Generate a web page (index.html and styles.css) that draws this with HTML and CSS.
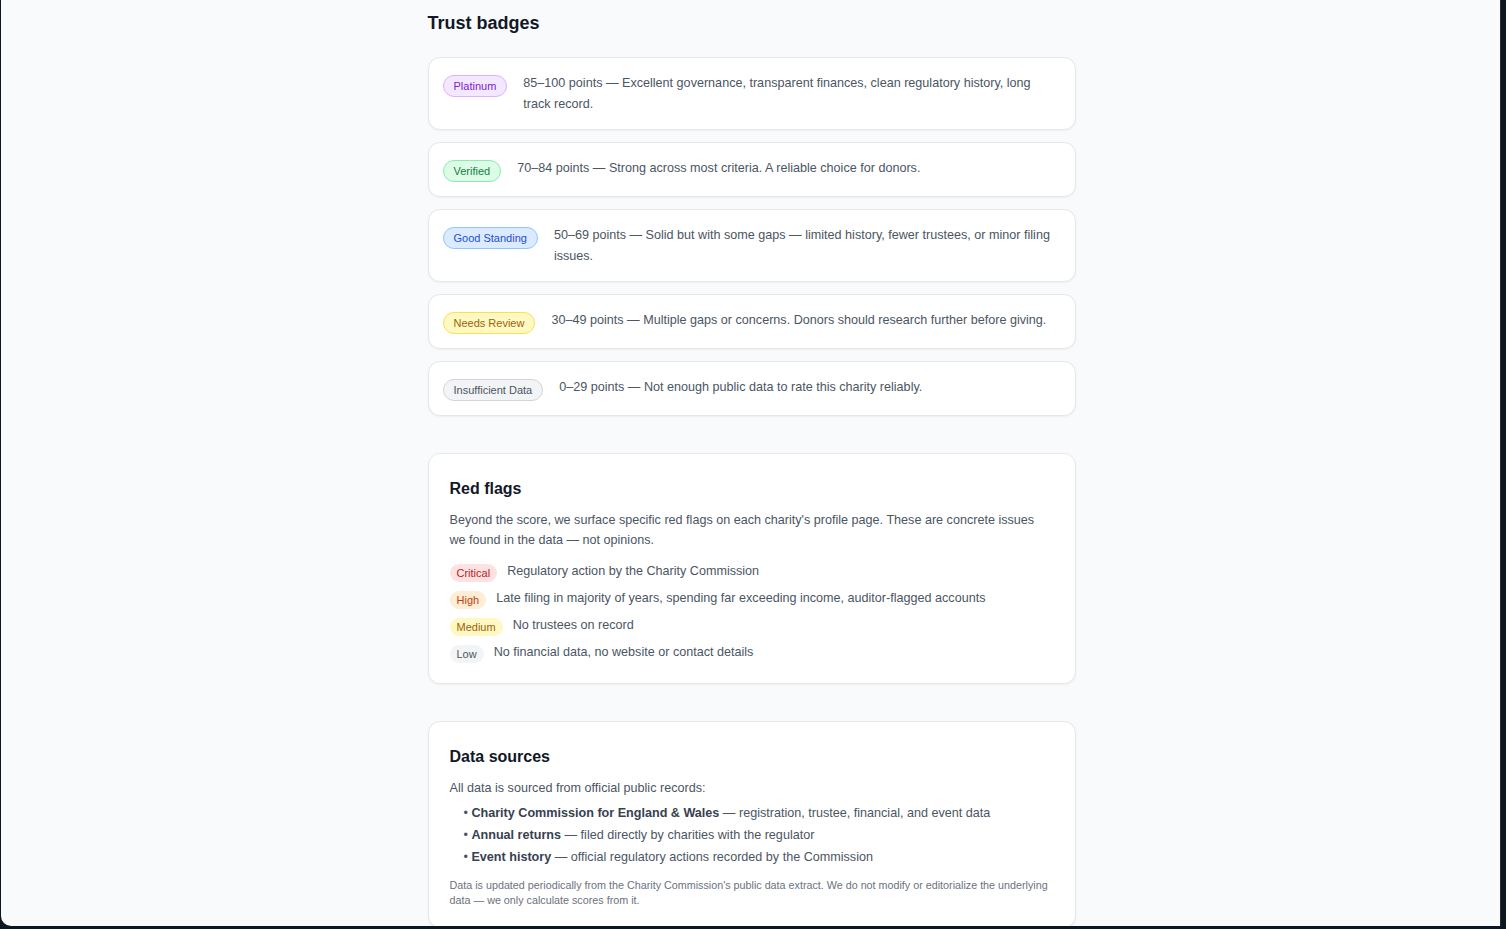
FILE: index.html
```html
<!DOCTYPE html>
<html lang="en">
<head>
<meta charset="utf-8">
<title>How we score charities</title>
<link rel="stylesheet" href="styles.css">
</head>
<body>
<div class="window">
  <main class="content">
    <section class="section">
      <h2 class="title-lg">Trust badges</h2>
      <div class="badge-list">
        <div class="badge-card">
          <span class="badge badge-platinum">Platinum</span>
          <p class="badge-text">85–100 points — Excellent governance, transparent finances, clean regulatory history, long track record.</p>
        </div>
        <div class="badge-card">
          <span class="badge badge-verified">Verified</span>
          <p class="badge-text">70–84 points — Strong across most criteria. A reliable choice for donors.</p>
        </div>
        <div class="badge-card">
          <span class="badge badge-good">Good Standing</span>
          <p class="badge-text">50–69 points — Solid but with some gaps — limited history, fewer trustees, or minor filing issues.</p>
        </div>
        <div class="badge-card">
          <span class="badge badge-review">Needs Review</span>
          <p class="badge-text">30–49 points — Multiple gaps or concerns. Donors should research further before giving.</p>
        </div>
        <div class="badge-card">
          <span class="badge badge-insufficient">Insufficient Data</span>
          <p class="badge-text">0–29 points — Not enough public data to rate this charity reliably.</p>
        </div>
      </div>
    </section>

    <section class="panel">
      <h2 class="title">Red flags</h2>
      <p class="lead">Beyond the score, we surface specific red flags on each charity's profile page. These are concrete issues we found in the data — not opinions.</p>
      <ul class="flag-list">
        <li class="flag-row"><span class="pill pill-critical">Critical</span><span class="flag-text">Regulatory action by the Charity Commission</span></li>
        <li class="flag-row"><span class="pill pill-high">High</span><span class="flag-text">Late filing in majority of years, spending far exceeding income, auditor-flagged accounts</span></li>
        <li class="flag-row"><span class="pill pill-medium">Medium</span><span class="flag-text">No trustees on record</span></li>
        <li class="flag-row"><span class="pill pill-low">Low</span><span class="flag-text">No financial data, no website or contact details</span></li>
      </ul>
    </section>

    <section class="panel panel-last">
      <h2 class="title">Data sources</h2>
      <p class="lead">All data is sourced from official public records:</p>
      <ul class="source-list">
        <li>• <strong>Charity Commission for England &amp; Wales</strong> — registration, trustee, financial, and event data</li>
        <li>• <strong>Annual returns</strong> — filed directly by charities with the regulator</li>
        <li>• <strong>Event history</strong> — official regulatory actions recorded by the Commission</li>
      </ul>
      <p class="footnote">Data is updated periodically from the Charity Commission's public data extract. We do not modify or editorialize the underlying data — we only calculate scores from it.</p>
    </section>
  </main>
</div>
</body>
</html>
```

FILE: styles.css
```css
* {
  box-sizing: border-box;
}

html, body {
  margin: 0;
  padding: 0;
}

body {
  height: 929px;
  overflow: hidden;
  background: #0d1722;
  font-family: "Liberation Sans", Arial, Helvetica, sans-serif;
  color: #4b5563;
}

.window {
  margin-left: 1px;
  width: 1500px;
  height: 926px;
  padding-left: 2px;
  background: #f9fafb;
  border-bottom-left-radius: 10px;
  border-right: 1px solid #2a2a2a;
  overflow: hidden;
}

.content {
  width: 648px;
  margin: 0 auto;
  padding-top: 9px;
}

.title-lg {
  margin: 0 0 20px;
  font-size: 18px;
  line-height: 28px;
  font-weight: 700;
  color: #111827;
}

.badge-list {
  display: flex;
  flex-direction: column;
  gap: 12px;
}

.badge-card {
  display: flex;
  align-items: flex-start;
  gap: 16px;
  padding: 15px 15px 14px 14px;
  background: #ffffff;
  border: 1px solid #e5e7eb;
  border-radius: 12px;
  box-shadow: 0 1px 2px rgba(0, 0, 0, 0.05);
}

.badge {
  flex: none;
  margin-top: 2px;
  padding: 0 10px;
  height: 22px;
  line-height: 20px;
  font-size: 11px;
  border: 1px solid;
  border-radius: 999px;
  white-space: nowrap;
}

.badge-platinum {
  background: #f3e8ff;
  border-color: #d8b4fe;
  color: #7e22ce;
}

.badge-verified {
  background: #dcfce7;
  border-color: #86efac;
  color: #15803d;
}

.badge-good {
  background: #dbeafe;
  border-color: #93c5fd;
  color: #1d4ed8;
}

.badge-review {
  background: #fef9c3;
  border-color: #fde047;
  color: #a16207;
}

.badge-insufficient {
  background: #f3f4f6;
  border-color: #d1d5db;
  color: #4b5563;
}

.badge-text {
  margin: 0;
  font-size: 12.6px;
  line-height: 21px;
  color: #4b5563;
}

.panel {
  margin-top: 37px;
  padding: 24px 21px 20px;
  background: #ffffff;
  border: 1px solid #e5e7eb;
  border-radius: 12px;
  box-shadow: 0 1px 2px rgba(0, 0, 0, 0.05);
}

.panel-last {
  padding-bottom: 20px;
}

.title {
  margin: 0 0 11px;
  font-size: 16px;
  line-height: 22px;
  font-weight: 700;
  color: #111827;
}

.lead {
  margin: 0;
  font-size: 12.6px;
  line-height: 19.5px;
  color: #4b5563;
}

.flag-list {
  list-style: none;
  margin: 12px 0 0;
  padding: 0;
  display: flex;
  flex-direction: column;
  gap: 7px;
}

.flag-row {
  display: flex;
  align-items: flex-start;
  gap: 10px;
}

.pill {
  flex: none;
  margin-top: 2px;
  padding: 0 7px;
  height: 18px;
  line-height: 18px;
  font-size: 11px;
  border-radius: 999px;
}

.pill-critical {
  background: #fee2e2;
  color: #b91c1c;
}

.pill-high {
  background: #ffedd5;
  color: #c2410c;
}

.pill-medium {
  background: #fef9c3;
  color: #a16207;
}

.pill-low {
  background: #f3f4f6;
  color: #4b5563;
}

.flag-text {
  font-size: 12.6px;
  line-height: 19.5px;
  color: #4b5563;
}

.source-list {
  list-style: none;
  margin: 5px 0 0;
  padding-left: 14px;
  display: flex;
  flex-direction: column;
  gap: 2.5px;
}

.source-list li {
  font-size: 12.6px;
  line-height: 19.5px;
  color: #4b5563;
}

.source-list strong {
  color: #374151;
  font-weight: 700;
}

.footnote {
  margin: 11px 0 0;
  font-size: 10.75px;
  line-height: 14.5px;
  color: #6b7280;
}
```
